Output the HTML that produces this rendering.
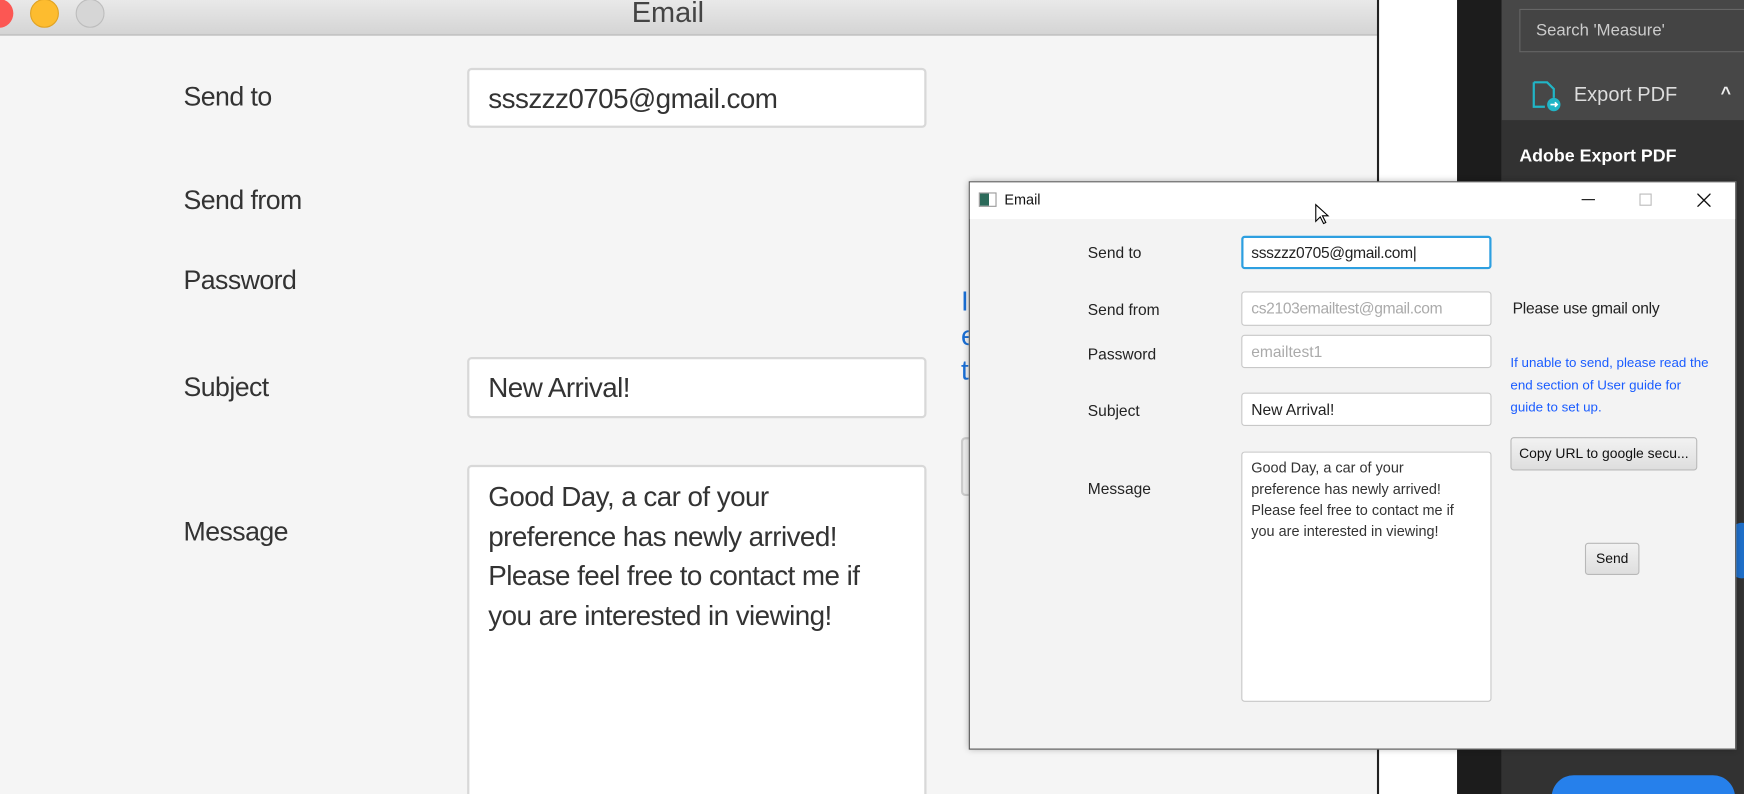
<!DOCTYPE html>
<html><head><meta charset="utf-8"><style>
*{box-sizing:border-box;margin:0;padding:0}
html,body{width:1744px;height:794px;overflow:hidden;background:#f5f5f5}
#w{position:absolute;left:0;top:0;width:1568px;height:714px;transform:scale(1.11224);transform-origin:0 0;font-family:"Liberation Sans",sans-serif;overflow:hidden}
.a{position:absolute}
.lbl{position:absolute;font-size:24px;color:#333;letter-spacing:-0.5px}
.inp{position:absolute;background:#fff;border:2px solid #d8d8d8;border-radius:4px;font-size:25px;color:#333;padding-left:17px;letter-spacing:-0.5px}
.wl{position:absolute;font-size:14px;color:#222}
.wi{position:absolute;background:#fff;border:1px solid #c8c8c8;border-radius:3px;font-size:14px;color:#222;padding-left:8px;line-height:28px}
.btn{position:absolute;background:linear-gradient(#f2f2f2,#dedede);border:1px solid #b8b8b8;border-radius:3px;font-size:12.5px;color:#111;text-align:center}
</style></head><body><div id="w">
<div class="a" style="left:0;top:0;width:1238px;height:714px;background:#f5f5f5"></div>
<div class="a" style="left:0;top:0;width:1238px;height:32px;background:linear-gradient(#e9e9e9,#d4d4d4);border-bottom:1px solid #b5b5b5"></div>
<div class="a" style="left:-14px;top:-1px;width:26px;height:26px;border-radius:50%;background:#fc5753"></div>
<div class="a" style="left:27px;top:-1px;width:26px;height:26px;border-radius:50%;background:#fdbc2f;border:1px solid #e0a324"></div>
<div class="a" style="left:68px;top:-1px;width:26px;height:26px;border-radius:50%;background:#d6d6d6;border:1px solid #bdbdbd"></div>
<div class="a" style="left:568px;top:-4px;font-size:26px;color:#444">Email</div>
<div class="lbl" style="left:165px;top:74px">Send to</div>
<div class="lbl" style="left:165px;top:167px">Send from</div>
<div class="lbl" style="left:165px;top:239px">Password</div>
<div class="lbl" style="left:165px;top:335px">Subject</div>
<div class="lbl" style="left:165px;top:465px">Message</div>
<div class="inp" style="left:420px;top:61px;width:413px;height:54px;line-height:52px">ssszzz0705@gmail.com</div>
<div class="inp" style="left:420px;top:321px;width:413px;height:55px;line-height:53px">New Arrival!</div>
<div class="inp" style="left:420px;top:418px;width:413px;height:310px;line-height:35.5px;padding-top:10px">Good Day, a car of your<br>preference has newly arrived!<br>Please feel free to contact me if<br>you are interested in viewing!</div>
<div class="a" style="left:864px;top:256px;font-size:25px;color:#1a6fd6;line-height:31px">I<br>e<br>t</div>
<div class="a" style="left:864px;top:393px;width:20px;height:53px;border:2px solid #ccc;border-radius:4px;background:#eee"></div>
<div class="a" style="left:1238px;top:0;width:2px;height:714px;background:#222"></div>
<div class="a" style="left:1240px;top:0;width:70px;height:714px;background:#fff"></div>
<div class="a" style="left:1310px;top:0;width:40px;height:714px;background:#1c1c1c"></div>
<div class="a" style="left:1350px;top:0;width:218px;height:714px;background:#323232"></div>
<div class="a" style="left:1350px;top:0;width:218px;height:108px;background:#474747"></div>
<div class="a" style="left:1366px;top:8px;width:210px;height:39px;border:1px solid #666;background:#444;color:#ccc;font-size:15px;padding:10px 0 0 14px">Search 'Measure'</div>
<svg class="a" style="left:1376px;top:72px" width="30" height="30" viewBox="0 0 30 30"><path d="M3 2h12l6 6v8M3 2v22h10" fill="none" stroke="#21b5c6" stroke-width="2"/><circle cx="21" cy="22" r="6" fill="#21b5c6"/><path d="M18 22h6m-2-2l2 2-2 2" stroke="#fff" stroke-width="1.5" fill="none"/></svg>
<div class="a" style="left:1415px;top:75px;font-size:18px;color:#ddd">Export PDF</div>
<div class="a" style="left:1547px;top:76px;font-size:16px;color:#eee;font-weight:bold">^</div>
<div class="a" style="left:1366px;top:132px;font-size:16px;color:#fff;font-weight:bold">Adobe Export PDF</div>
<div class="a" style="left:1395px;top:697px;width:165px;height:40px;border-radius:20px;background:#2680eb"></div>
<div class="a" style="left:1556px;top:470px;width:20px;height:50px;border-radius:20px;background:#1f6fc9"></div>
<div class="a" style="left:871px;top:163px;width:690px;height:511px;border:1px solid #555;background:#f3f3f3;box-shadow:0 0 6px rgba(0,0,0,.3)"></div>
<div class="a" style="left:872px;top:164px;width:688px;height:33px;background:#fff"></div>
<div class="a" style="left:880px;top:173px;width:16px;height:13px;border:1px solid #999;background:linear-gradient(90deg,#2c6a5a 60%,#fff 60%)"></div>
<div class="a" style="left:903px;top:172px;font-size:13px;color:#111">Email</div>
<div class="a" style="left:1422px;top:179px;width:12px;height:1px;background:#111"></div>
<div class="a" style="left:1474px;top:174px;width:11px;height:11px;border:1px solid #bbb"></div>
<svg class="a" style="left:1526px;top:174px" width="12" height="12"><path d="M0 0L12 12M12 0L0 12" stroke="#111" stroke-width="1.2"/></svg>
<svg class="a" style="left:1182px;top:183px" width="14" height="20"><path d="M1 1v15l4-4 3 6 2-1-3-6h5z" fill="#fff" stroke="#000"/></svg>
<div class="wl" style="left:978px;top:219px">Send to</div>
<div class="wl" style="left:978px;top:270px">Send from</div>
<div class="wl" style="left:978px;top:310px">Password</div>
<div class="wl" style="left:978px;top:361px">Subject</div>
<div class="wl" style="left:978px;top:431px">Message</div>
<div class="wi" style="left:1116px;top:212px;width:225px;height:30px;border:2px solid #2d9fe0;padding-left:7px;line-height:26px;letter-spacing:-0.3px">ssszzz0705@gmail.com|</div>
<div class="wi" style="left:1116px;top:262px;width:225px;height:31px;color:#aaa;letter-spacing:-0.3px">cs2103emailtest@gmail.com</div>
<div class="wi" style="left:1116px;top:301px;width:225px;height:30px;color:#aaa">emailtest1</div>
<div class="wi" style="left:1116px;top:353px;width:225px;height:30px">New Arrival!</div>
<div class="wi" style="left:1116px;top:406px;width:225px;height:225px;line-height:19px;padding-top:4px;font-size:13px;color:#333">Good Day, a car of your<br>preference has newly arrived!<br>Please feel free to contact me if<br>you are interested in viewing!</div>
<div class="a" style="left:1360px;top:269px;font-size:14px;color:#222;letter-spacing:-0.2px">Please use gmail only</div>
<div class="a" style="left:1358px;top:316px;font-size:12px;color:#1a5cff;line-height:20px">If unable to send, please read the<br>end section of User guide for<br>guide to set up.</div>
<div class="btn" style="left:1358px;top:393px;width:168px;height:30px;line-height:28px">Copy URL to google secu...</div>
<div class="btn" style="left:1425px;top:488px;width:49px;height:29px;line-height:27px">Send</div>
</div></body></html>
